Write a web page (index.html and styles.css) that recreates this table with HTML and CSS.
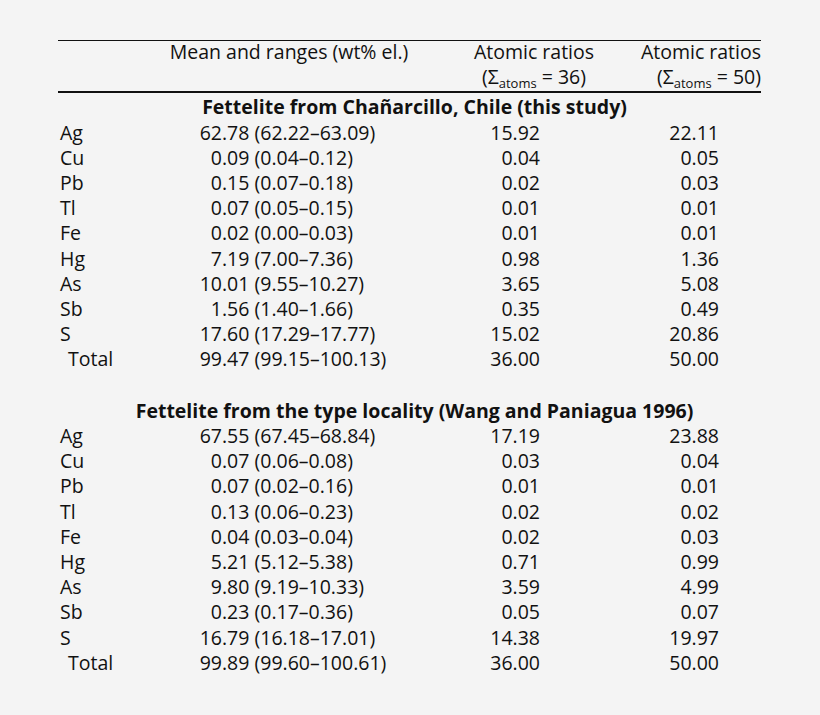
FILE: index.html
```html
<!DOCTYPE html>
<html lang="en">
<head>
    <meta charset="UTF-8">
    <title>Fettelite composition</title>
    <link rel="stylesheet" href="styles.css">
</head>
<body>
    <div class="tabela">
        <div class="cab">
            <div></div>
            <div class="c2">Mean and ranges (wt% el.)</div>
            <div class="c3">Atomic ratios<br>(&Sigma;<sub>atoms</sub> = 36)</div>
            <div class="c4">Atomic ratios<br>(&Sigma;<sub>atoms</sub> = 50)</div>
        </div>

        <div class="secao">Fettelite from Chañarcillo, Chile (this study)</div>
        <div class="linha"><div>Ag</div><div class="c2"><span class="int">62</span>.78 (62.22–63.09)</div><div class="c3">15.92</div><div class="c4">22.11</div></div>
        <div class="linha"><div>Cu</div><div class="c2"><span class="int">0</span>.09 (0.04–0.12)</div><div class="c3">0.04</div><div class="c4">0.05</div></div>
        <div class="linha"><div>Pb</div><div class="c2"><span class="int">0</span>.15 (0.07–0.18)</div><div class="c3">0.02</div><div class="c4">0.03</div></div>
        <div class="linha"><div>Tl</div><div class="c2"><span class="int">0</span>.07 (0.05–0.15)</div><div class="c3">0.01</div><div class="c4">0.01</div></div>
        <div class="linha"><div>Fe</div><div class="c2"><span class="int">0</span>.02 (0.00–0.03)</div><div class="c3">0.01</div><div class="c4">0.01</div></div>
        <div class="linha"><div>Hg</div><div class="c2"><span class="int">7</span>.19 (7.00–7.36)</div><div class="c3">0.98</div><div class="c4">1.36</div></div>
        <div class="linha"><div>As</div><div class="c2"><span class="int">10</span>.01 (9.55–10.27)</div><div class="c3">3.65</div><div class="c4">5.08</div></div>
        <div class="linha"><div>Sb</div><div class="c2"><span class="int">1</span>.56 (1.40–1.66)</div><div class="c3">0.35</div><div class="c4">0.49</div></div>
        <div class="linha"><div>S</div><div class="c2"><span class="int">17</span>.60 (17.29–17.77)</div><div class="c3">15.02</div><div class="c4">20.86</div></div>
        <div class="linha total"><div>Total</div><div class="c2"><span class="int">99</span>.47 (99.15–100.13)</div><div class="c3">36.00</div><div class="c4">50.00</div></div>

        <div class="secao espaco">Fettelite from the type locality (Wang and Paniagua 1996)</div>
        <div class="linha"><div>Ag</div><div class="c2"><span class="int">67</span>.55 (67.45–68.84)</div><div class="c3">17.19</div><div class="c4">23.88</div></div>
        <div class="linha"><div>Cu</div><div class="c2"><span class="int">0</span>.07 (0.06–0.08)</div><div class="c3">0.03</div><div class="c4">0.04</div></div>
        <div class="linha"><div>Pb</div><div class="c2"><span class="int">0</span>.07 (0.02–0.16)</div><div class="c3">0.01</div><div class="c4">0.01</div></div>
        <div class="linha"><div>Tl</div><div class="c2"><span class="int">0</span>.13 (0.06–0.23)</div><div class="c3">0.02</div><div class="c4">0.02</div></div>
        <div class="linha"><div>Fe</div><div class="c2"><span class="int">0</span>.04 (0.03–0.04)</div><div class="c3">0.02</div><div class="c4">0.03</div></div>
        <div class="linha"><div>Hg</div><div class="c2"><span class="int">5</span>.21 (5.12–5.38)</div><div class="c3">0.71</div><div class="c4">0.99</div></div>
        <div class="linha"><div>As</div><div class="c2"><span class="int">9</span>.80 (9.19–10.33)</div><div class="c3">3.59</div><div class="c4">4.99</div></div>
        <div class="linha"><div>Sb</div><div class="c2"><span class="int">0</span>.23 (0.17–0.36)</div><div class="c3">0.05</div><div class="c4">0.07</div></div>
        <div class="linha"><div>S</div><div class="c2"><span class="int">16</span>.79 (16.18–17.01)</div><div class="c3">14.38</div><div class="c4">19.97</div></div>
        <div class="linha total"><div>Total</div><div class="c2"><span class="int">99</span>.89 (99.60–100.61)</div><div class="c3">36.00</div><div class="c4">50.00</div></div>
    </div>
</body>
</html>
```

FILE: styles.css
```css
*{
    margin: 0;
    padding: 0;
}
body {
    background-color: #f4f4f4;
    color: #111;
    font-family: "Open Sans", "Noto Sans", sans-serif;
    font-size: 19.5px;
}

.tabela{
    width: 703px;
    margin: 40px 0 0 58px;
    border-top: 1px solid #111;
}

.cab, .linha{
    display: grid;
    grid-template-columns: 84px 326px 132px 161px;
    line-height: 25.2px;
    white-space: nowrap;
}

.cab{
    margin-top: -2px;
    padding-bottom: 2px;
    border-bottom: 2px solid #111;
}
.cab .c2{
    text-align: center;
    padding-right: 32px;
}
.cab .c3{
    text-align: center;
    padding-right: 0;
}
.cab .c4{
    text-align: right;
    padding-right: 0;
}

sub{
    font-size: 13px;
    line-height: 0;
    vertical-align: -4px;
}

.linha div:first-child{
    padding-left: 2px;
}
.total div:first-child{
    padding-left: 10px;
}

.int{
    display: inline-block;
    width: 80px;
    text-align: right;
}

.c3{
    text-align: right;
    padding-right: 60px;
}
.c4{
    text-align: right;
    padding-right: 42px;
}

.secao{
    font-weight: 700;
    text-align: center;
    padding-left: 10px;
    padding-top: 1px;
    line-height: 25.2px;
}
.espaco{
    margin-top: 25.2px;
}
```
